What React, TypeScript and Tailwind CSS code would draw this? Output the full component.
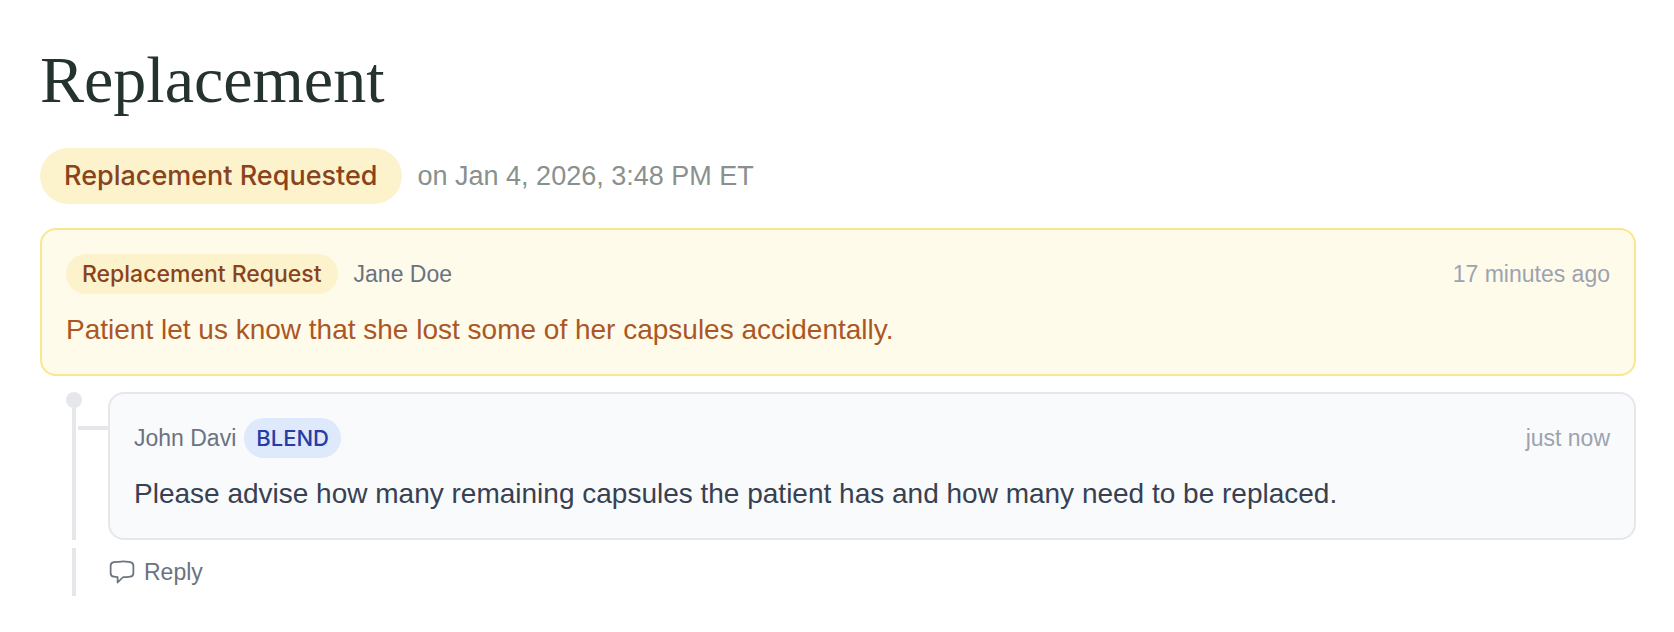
import type { ReactNode } from "react"
import clsx from "clsx"
import { HiOutlineChatBubbleLeft } from "react-icons/hi2"

type CommentCardProps = {
	header: ReactNode
	time: string
	message: string
	className?: string
}

const CommentCard = ({ header, time, message, className }: CommentCardProps) => {
	return (
		<article
			className={clsx("min-w-0 flex-1 space-y-4 rounded-2xl border-2 p-6", className)}
		>
			<header className="flex items-center justify-between gap-4 text-[23px] leading-10">
				<div className="flex items-center">{header}</div>
				<time className="shrink-0 text-[#9ca3af]">{time}</time>
			</header>
			<p className="text-[28px] leading-10">{message}</p>
		</article>
	)
}

export default function App() {
	return (
		<main className="w-full bg-white pt-12 pr-[38px] pb-9 pl-10 font-['Liberation_Sans',sans-serif]">
			<h1 className="font-['Liberation_Serif',serif] text-[66px] leading-16 text-[#24332e]">
				Replacement
			</h1>

			<div className="mt-9 flex flex-wrap items-center gap-4 text-[27px] leading-10">
				<span className="rounded-full bg-[#fcf3cd] px-6 py-2 font-['Inter',sans-serif] font-medium text-[#8a431c]">
					Replacement Requested
				</span>
				<span className="text-[#8a908e]">on Jan 4, 2026, 3:48 PM ET</span>
			</div>

			<section className="mt-6">
				<CommentCard
					className="border-[#fae68f] bg-[#fffbeb] text-[#ab5724]"
					header={
						<>
							<span className="mr-4 rounded-full bg-[#fcf3cd] px-4 font-['Inter',sans-serif] font-medium text-[#8a431c]">
								Replacement Request
							</span>
							<span className="text-[#6b7280]">Jane Doe</span>
						</>
					}
					time="17 minutes ago"
					message="Patient let us know that she lost some of her capsules accidentally."
				/>

				<div className="mt-4 flex">
					{/* thread line */}
					<div className="flex w-[68px] shrink-0 pl-[26px]">
						<div className="flex w-4 flex-col items-center">
							<div className="size-4 rounded-full bg-[#e5e7eb]" />
							<div className="w-1 flex-1 bg-[#e5e7eb]" />
						</div>
						<div className="-ml-1 mt-[34px] h-1 flex-1 bg-[#e5e7eb]" />
					</div>
					<CommentCard
						className="border-[#e5e7eb] bg-[#f9fafc] text-[#374151]"
						header={
							<>
								<span className="mr-2 text-[#6b7280]">John Davi</span>
								<span className="rounded-full bg-[#dee9fc] px-3 font-['Inter',sans-serif] text-[22px] leading-10 font-medium text-[#263da8]">
									BLEND
								</span>
							</>
						}
						time="just now"
						message="Please advise how many remaining capsules the patient has and how many need to be replaced."
					/>
				</div>

				<div className="mt-2 flex">
					<div className="flex w-[68px] shrink-0 pl-8">
						<div className="w-1 bg-[#e5e7eb]" />
					</div>
					<button
						type="button"
						className="flex h-12 cursor-pointer items-center gap-2 text-[23px] leading-10 text-[#6b7280]"
					>
						<HiOutlineChatBubbleLeft className="size-7" aria-hidden="true" />
						Reply
					</button>
				</div>
			</section>
		</main>
	)
}
